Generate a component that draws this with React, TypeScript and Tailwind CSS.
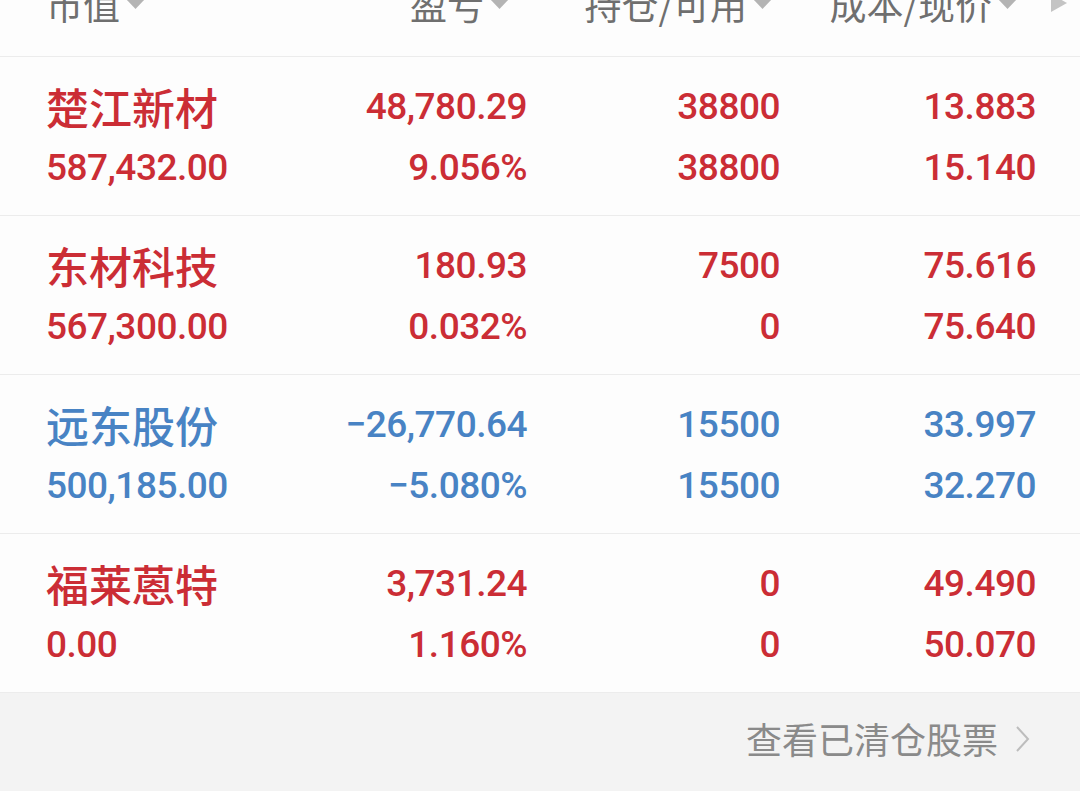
import React from "react";

type Stock = {
  name: string;
  value: string;
  pnl: string;
  pct: string;
  hold: string;
  avail: string;
  cost: string;
  price: string;
  up: boolean;
};

const stocks: Stock[] = [
  { name: "楚江新材", value: "587,432.00", pnl: "48,780.29", pct: "9.056%", hold: "38800", avail: "38800", cost: "13.883", price: "15.140", up: true },
  { name: "东材科技", value: "567,300.00", pnl: "180.93", pct: "0.032%", hold: "7500", avail: "0", cost: "75.616", price: "75.640", up: true },
  { name: "远东股份", value: "500,185.00", pnl: "-26,770.64", pct: "-5.080%", hold: "15500", avail: "15500", cost: "33.997", price: "32.270", up: false },
  { name: "福莱蒽特", value: "0.00", pnl: "3,731.24", pct: "1.160%", hold: "0", avail: "0", cost: "49.490", price: "50.070", up: true },
];

const cjk = "font-['Noto_Sans_CJK_SC',sans-serif]";
const num = "font-['Roboto','Noto_Sans_CJK_SC',sans-serif] tracking-[-0.5px]";

const SortIcon = () => (
  <svg width="21" height="34" viewBox="0 0 21 34" className="shrink-0">
    <polygon points="1,9 20,9 10.5,0" fill="#dcdcdc" />
    <polygon points="1,12 20,12 10.5,22" fill="#b4b4b4" />
  </svg>
);

const HeaderCell = ({ label, className }: { label: string; className: string }) => (
  <div className={`flex items-center gap-[5px] ${className}`}>
    <span className={`${cjk} text-[37px] leading-[36px] text-[#6f6f6f]`}>{label}</span>
    <SortIcon />
  </div>
);

const StockRow = ({ s }: { s: Stock }) => {
  const color = s.up ? "text-[#cb2d35]" : "text-[#4883c4]";
  return (
    <div className={`grid grid-cols-[230px_251px_253px_256px] pl-[46px] pt-[19px] pb-[17px] border-b border-[#ececec] font-medium ${color}`}>
      <div className="flex flex-col">
        <span className={`${cjk} text-[43px] leading-[61px]`}>{s.name}</span>
        <span className={`${num} text-[37px] leading-[61px]`}>{s.value}</span>
      </div>
      <div className={`flex flex-col items-end ${num} text-[37px] leading-[61px]`}>
        <span>{s.pnl.replace("-", "\u2212")}</span>
        <span>{s.pct.replace("-", "\u2212")}</span>
      </div>
      <div className={`flex flex-col items-end ${num} text-[37px] leading-[61px]`}>
        <span>{s.hold}</span>
        <span>{s.avail}</span>
      </div>
      <div className={`flex flex-col items-end ${num} text-[37px] leading-[61px]`}>
        <span>{s.cost}</span>
        <span>{s.price}</span>
      </div>
    </div>
  );
};

export default function App() {
  return (
    <div className="w-[1080px] h-[791px] overflow-hidden bg-[#fdfdfd] flex flex-col">
      <div className="relative h-[57px] shrink-0 border-b border-[#ececec]">
        <div className="grid grid-cols-[230px_251px_253px_256px] pl-[46px] -mt-[14px]">
          <HeaderCell label="市值" className="justify-start" />
          <HeaderCell label="盈亏" className="justify-end pr-[17px]" />
          <HeaderCell label="持仓/可用" className="justify-end pr-[7px]" />
          <HeaderCell label="成本/现价" className="justify-end pr-[18px]" />
        </div>
        <svg width="16" height="24" viewBox="0 0 16 24" className="absolute right-[13px] -top-[6px]">
          <polygon points="0,0 16,9 0,18" fill="#c4c4c4" />
        </svg>
      </div>
      {stocks.map((s) => (
        <StockRow key={s.name} s={s} />
      ))}
      <div className="flex-1 bg-[#f3f3f3] flex items-start justify-end pr-[50px] pt-[23px] gap-[18px]">
        <span className={`${cjk} text-[36px] leading-[44px] text-[#8a8a8a]`}>查看已清仓股票</span>
        <svg width="14" height="26" viewBox="0 0 14 26" className="mt-[10px]">
          <polyline points="1,1 12,13 1,25" fill="none" stroke="#bdbdbd" strokeWidth="2" />
        </svg>
      </div>
    </div>
  );
}
